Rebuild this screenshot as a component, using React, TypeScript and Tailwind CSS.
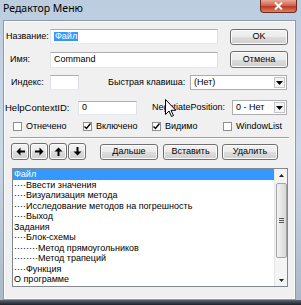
import React from 'react'

const ui = "font-['Liberation_Sans',Arial,sans-serif] text-black"

function TextBox({ className = '', children }: { className?: string; children?: React.ReactNode }) {
  return (
    <div
      className={`flex items-center bg-white border border-[#abadb3] border-l-[#e2e3ea] border-r-[#dbdfe6] border-b-[#e3e9ef] pl-[3px] text-[9px] leading-none ${className}`}
    >
      {children}
    </div>
  )
}

function Btn({ className = '', children }: { className?: string; children?: React.ReactNode }) {
  return (
    <div
      className={`flex items-center justify-center rounded-[3px] border border-[#707070] bg-[linear-gradient(#f2f2f2,#ebebeb_50%,#dddddd_50%,#cfcfcf)] shadow-[inset_0_0_0_1px_#fcfcfc] text-[9px] leading-none ${className}`}
    >
      {children}
    </div>
  )
}

function Combo({ className = '', text }: { className?: string; text: string }) {
  return (
    <div className={`flex bg-white border border-[#abadb3] ${className}`}>
      <span className="flex-1 flex items-center pl-[3px] text-[9px] leading-none">{text}</span>
      <div className="w-[11px] my-[1px] mr-[1px] flex items-center justify-center border border-[#c5c5c5] bg-[#f4f4f4]">
        <svg width="7" height="4" viewBox="0 0 7 4">
          <path d="M0 0h7L3.5 4z" fill="#000" />
        </svg>
      </div>
    </div>
  )
}

function Check({ checked, label }: { checked?: boolean; label: string }) {
  return (
    <div className="flex items-center gap-[4px]">
      <div className="w-[9px] h-[9px] border border-[#8e8f8f] bg-white flex items-center justify-center">
        {checked && (
          <svg width="7" height="7" viewBox="0 0 7 7">
            <path d="M0.5 3.5l2 2 4-5" stroke="#000" strokeWidth="1.4" fill="none" />
          </svg>
        )}
      </div>
      <span className="text-[9px] leading-none">{label}</span>
    </div>
  )
}

function Arrow({ dir }: { dir: 'l' | 'r' | 'u' | 'd' }) {
  const rot = { l: 'rotate-180', r: '', u: '-rotate-90', d: 'rotate-90' }[dir]
  return (
    <Btn className="w-[18px] h-[17px]">
      <svg width="9" height="9" viewBox="0 0 9 9" className={rot}>
        <path d="M0 3.5h4.5V0.5L8.5 4.5 4.5 8.5V5.5H0z" fill="#000" />
      </svg>
    </Btn>
  )
}

const items = [
  'Файл',
  '····Ввести значения',
  '····Визуализация метода',
  '····Исследование методов на погрешность',
  '····Выход',
  'Задания',
  '····Блок-схемы',
  '········Метод прямоугольников',
  '········Метод трапеций',
  '····Функция',
  'О программе',
]

export default function App() {
  return (
    <div className={`relative w-[301px] h-[305px] overflow-hidden bg-linear-to-b from-[#bccde0] via-[#cbd8e6] to-[#aab8c6] ${ui}`}>
      {/* title bar */}
      <div className="flex h-[21px] items-start">
        <span className="pl-[3px] pt-[3px] text-[10.5px] leading-none font-['Noto_Sans',sans-serif] text-black">
          Редактор Меню
        </span>
        <div className="ml-auto mr-[4px] w-[37px] h-[13px] rounded-b-[4px] border border-t-0 border-[#6b2b22] bg-[linear-gradient(#e9a999,#d0634d_45%,#c0391f_55%,#d9836f)] flex items-center justify-center">
          <svg width="9" height="8" viewBox="0 0 9 8">
            <path d="M1 0.5l7 7M8 0.5l-7 7" stroke="#fff" strokeWidth="2" />
          </svg>
        </div>
      </div>

      {/* client area */}
      <div className="ml-[4px] w-[291px] h-[278px] bg-[#f0f0f0] border border-[#f9fbfd] shadow-[0_0_0_1px_#8a9bb0]">
        {/* name */}
        <div className="flex items-center mt-[6px] h-[17px]">
          <span className="w-[45px] pl-[1px] text-[9px] leading-none whitespace-nowrap">Название:</span>
          <TextBox className="w-[168px] h-[15px]">
            <span className="bg-[#3399ff] text-white px-[1px]">Файл</span>
          </TextBox>
          <Btn className="ml-[12px] w-[58px] h-[16px]">OK</Btn>
        </div>
        {/* caption */}
        <div className="flex items-center mt-[6px] h-[17px]">
          <span className="w-[45px] pl-[5px] text-[9px] leading-none">Имя:</span>
          <TextBox className="w-[168px] h-[16px]">Command</TextBox>
          <Btn className="ml-[12px] w-[58px] h-[17px]">Отмена</Btn>
        </div>
        {/* index / shortcut */}
        <div className="flex items-center mt-[7px] h-[15px]">
          <span className="w-[45px] pl-[6px] text-[9px] leading-none">Индекс:</span>
          <TextBox className="w-[29px] h-[15px]" />
          <span className="w-[111px] pl-[29px] text-[9px] leading-none whitespace-nowrap">Быстрая клавиша:</span>
          <Combo className="w-[97px] h-[15px]" text="(Нет)" />
        </div>
        {/* help / negotiate */}
        <div className="flex items-center mt-[10px] h-[15px]">
          <span className="w-[73px] text-[9.5px] leading-none">HelpContextID:</span>
          <TextBox className="w-[59px] h-[14px]">0</TextBox>
          <span className="w-[95px] pl-[15px] text-[9px] leading-none whitespace-nowrap">NegotiatePosition:</span>
          <Combo className="w-[55px] h-[15px]" text="0 - Нет" />
        </div>
        {/* checks */}
        <div className="flex items-center mt-[5px] h-[12px] pl-[8px]">
          <div className="w-[70px]">
            <Check label="Отнечено" />
          </div>
          <div className="w-[69px]">
            <Check checked label="Включено" />
          </div>
          <div className="w-[71px]">
            <Check checked label="Видимо" />
          </div>
          <Check label="WindowList" />
        </div>
        {/* separator */}
        <div className="mt-[5px] ml-[5px] w-[279px] h-[2px] border-t border-[#a0a0a0] border-b border-b-white" />
        {/* buttons */}
        <div className="flex items-center mt-[4px] h-[17px] pl-[6px]">
          <div className="flex gap-[1px]">
            <Arrow dir="l" />
            <Arrow dir="r" />
            <Arrow dir="u" />
            <Arrow dir="d" />
          </div>
          <Btn className="ml-[14px] w-[58px] h-[16px]">Дальше</Btn>
          <Btn className="ml-[5px] w-[55px] h-[16px]">Вставить</Btn>
          <Btn className="ml-[4px] w-[56px] h-[16px]">Удалить</Btn>
        </div>
        {/* list */}
        <div className="mt-[8px] ml-[7px] w-[276px] h-[119px] flex bg-white border border-[#828790]">
          <div className="flex-1 flex flex-col">
            {items.map((t, i) => (
              <div
                key={i}
                className={`h-[10.5px] pl-[1px] text-[9px] leading-[10.5px] whitespace-nowrap ${i === 0 ? 'bg-[#3399ff] text-white' : ''}`}
              >
                {t}
              </div>
            ))}
          </div>
          {/* scrollbar */}
          <div className="w-[13px] flex flex-col items-center bg-[#f4f4f4] border-l border-[#e6e6e6]">
            <div className="h-[12px] flex items-center justify-center">
              <svg width="5" height="3" viewBox="0 0 5 3">
                <path d="M0 3h5L2.5 0z" fill="#222" />
              </svg>
            </div>
            <div className="mt-[2px] w-[11px] h-[75px] rounded-[2px] border border-[#a4a4a4] bg-linear-to-r from-[#f3f3f3] to-[#d8d8d8] flex flex-col items-center justify-center gap-[1px]">
              <div className="w-[5px] h-[1px] bg-[#555]" />
              <div className="w-[5px] h-[1px] bg-[#555]" />
              <div className="w-[5px] h-[1px] bg-[#555]" />
            </div>
            <div className="mt-auto h-[12px] flex items-center justify-center">
              <svg width="5" height="3" viewBox="0 0 5 3">
                <path d="M0 0h5L2.5 3z" fill="#222" />
              </svg>
            </div>
          </div>
        </div>
      </div>

      {/* window bottom edge */}
      <div className="absolute left-0 bottom-0 w-full h-[5px] bg-linear-to-b from-[#5c6570] to-[#1d2127]" />

      {/* mouse pointer */}
      <svg className="absolute left-[165px] top-[99px]" width="11" height="18" viewBox="0 0 11 18">
        <path d="M0.5 0.5v15l3.5-3.5 2.5 5.5 2-1-2.5-5.2h4.8z" fill="#fff" stroke="#000" strokeWidth="1" />
      </svg>
    </div>
  )
}
